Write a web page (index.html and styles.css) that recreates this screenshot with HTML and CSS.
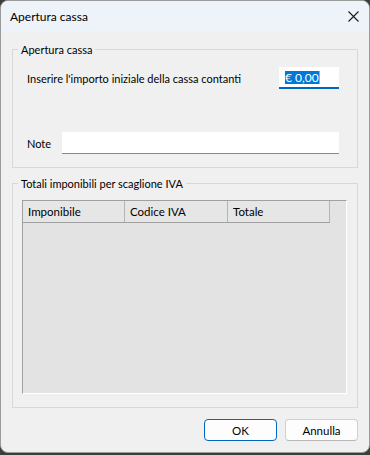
FILE: index.html
```html
<!DOCTYPE html>
<html lang="it">
<head>
    <meta charset="UTF-8">
    <meta name="viewport" content="width=device-width, initial-scale=1.0">
    <title>Apertura cassa</title>
    <link rel="stylesheet" href="styles.css">
</head>
<body>
    <div class="window">
        <!-- Barra del titolo -->
        <div class="titlebar">
            <span class="title">Apertura cassa</span>
            <span class="close">
                <svg width="11" height="11" viewBox="0 0 11 11">
                    <path d="M0.5 0.5 L10.5 10.5 M10.5 0.5 L0.5 10.5" stroke="#1a1a1a" stroke-width="1.1" fill="none"/>
                </svg>
            </span>
        </div>

        <div class="content">
            <fieldset class="group group-apertura">
                <legend>Apertura cassa</legend>
                <div class="row row-importo">
                    <label class="importo-label">Inserire l'importo iniziale della cassa contanti</label>
                    <div class="input input-importo"><span class="selected">€ 0,00</span><span class="caret"></span></div>
                </div>
                <div class="row row-note">
                    <label class="note-label">Note</label>
                    <div class="input input-note"></div>
                </div>
            </fieldset>

            <fieldset class="group group-totali">
                <legend>Totali imponibili per scaglione IVA</legend>
                <div class="listview">
                    <div class="list-header">
                        <div class="col">Imponibile</div>
                        <div class="col">Codice IVA</div>
                        <div class="col">Totale</div>
                    </div>
                </div>
            </fieldset>

            <div class="buttons">
                <button class="btn btn-default">OK</button>
                <button class="btn">Annulla</button>
            </div>
        </div>
    </div>
</body>
</html>
```

FILE: styles.css
```css
/* Finestra di dialogo */
* {
    margin: 0;
    padding: 0;
    box-sizing: border-box;
    font-family: Lato, "Noto Sans", sans-serif;
}

body {
    width: 370px;
    height: 455px;
    background-color: #3a3f3c;
    overflow: hidden;
}

.window {
    width: 370px;
    height: 453px;
    background-color: #f0f0f0;
    border: 1px solid #9a9a9a;
    border-radius: 8px;
    overflow: hidden;
    display: flex;
    flex-direction: column;
}

.titlebar {
    height: 30px;
    background-color: #eef2f9;
    display: flex;
    align-items: center;
    justify-content: space-between;
    padding: 0 10px 0 9px;
    flex-shrink: 0;
}

.title {
    font-size: 12px;
    color: #000;
}

.close {
    display: flex;
    align-items: center;
    margin-top: 1px;
}

.content {
    flex-grow: 1;
    padding: 11px 11px 0 11px;
    display: flex;
    flex-direction: column;
}

.group {
    border: 1px solid #d8d8d8;
    border-radius: 0;
    min-width: 0;
}

.group legend {
    font-size: 11px;
    line-height: 15px;
    color: #000;
    padding: 0 3px;
}

.group-apertura {
    padding: 10px 18px 13px 14px;
}

.group-apertura legend {
    margin-left: -9px;
}

.row {
    display: flex;
    align-items: center;
    height: 22px;
    font-size: 11px;
    color: #000;
    white-space: nowrap;
}

.row-importo {
    justify-content: space-between;
}

.row-note {
    margin-top: 43px;
}

.note-label {
    width: 35px;
    flex-shrink: 0;
}

.input {
    height: 22px;
    background-color: #fff;
    border-bottom: 1px solid #8a8a8a;
    display: flex;
    align-items: center;
}

.input-importo {
    width: 60px;
    flex-shrink: 0;
    border-bottom: 2px solid #0067c0;
    padding-left: 6px;
}

.input-importo .selected {
    background-color: #0078d7;
    color: #fff;
    line-height: 13px;
    font-size: 12px;
}

.input-importo .caret {
    width: 1px;
    height: 13px;
    background-color: #f0a030;
}

.input-note {
    flex-grow: 1;
}

.group-totali {
    margin-top: 8px;
    padding: 9px 10px 13px 9px;
}

.group-totali legend {
    margin-left: -4px;
}

.listview {
    height: 194px;
    background-color: #e3e3e3;
    border-top: 1px solid #a0a0a0;
    border-left: 1px solid #a0a0a0;
    border-right: 1px solid #fff;
    border-bottom: 1px solid #fff;
}

.list-header {
    display: flex;
    height: 22px;
    width: 307px;
    border-bottom: 1px solid #a0a0a0;
    background-color: #e6e6e6;
}

.list-header .col {
    width: 102px;
    font-size: 11.5px;
    color: #000;
    padding-left: 5px;
    border-right: 1px solid #b4b4b4;
    display: flex;
    align-items: center;
}

.list-header .col:nth-child(2) {
    width: 103px;
}

.buttons {
    display: flex;
    justify-content: flex-end;
    gap: 8px;
    margin-top: 11px;
}

.btn {
    width: 73px;
    height: 22px;
    font-size: 11.5px;
    color: #000;
    background-color: #fdfdfd;
    border: 1px solid #d0d0d0;
    border-bottom-color: #b8b8b8;
    border-radius: 4px;
    cursor: pointer;
}

.btn-default {
    border: 1px solid #0067c0;
}
```
